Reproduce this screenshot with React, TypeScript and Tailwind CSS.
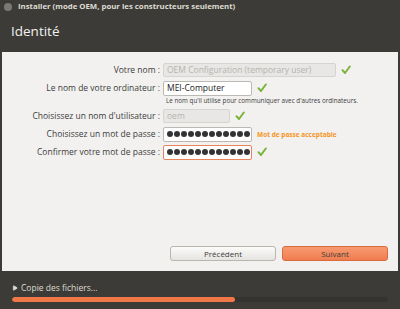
import { Play } from "lucide-react";

function Check() {
  return (
    <svg width="10" height="10" viewBox="0 0 10 10" className="shrink-0">
      <path d="M1.5 5.2 L4 8 L8.8 1.5" fill="none" stroke="#7ab33a" strokeWidth="2" strokeLinecap="round" strokeLinejoin="round" />
    </svg>
  );
}

function Dots({ n }: { n: number }) {
  return (
    <div className="flex items-center gap-[1px]">
      {Array.from({ length: n }).map((_, i) => (
        <span key={i} className="w-[6px] h-[6px] rounded-full bg-[#333]" />
      ))}
    </div>
  );
}

function Row({ label, children }: { label: string; children: React.ReactNode }) {
  return (
    <div className="flex items-center h-[14px]">
      <div className="w-[161px] text-right pr-[3px] text-[8.5px] text-[#3c3c3c] whitespace-nowrap">{label} :</div>
      <div className="flex items-center gap-[5px]">{children}</div>
    </div>
  );
}

export default function App() {
  return (
    <div className="w-[400px] h-[309px] bg-[#3c3b37] flex flex-col overflow-hidden" style={{ fontFamily: '"Open Sans", "DejaVu Sans", sans-serif' }}>
      {/* title bar */}
      <div className="h-[14px] flex items-center gap-[6px] px-[4px]">
        <span className="w-[8px] h-[8px] rounded-full bg-[#7a7973]" />
        <span className="text-[7.8px] font-bold text-[#dfdbd2]">Installer (mode OEM, pour les constructeurs seulement)</span>
      </div>
      {/* header */}
      <div className="h-[38px] flex items-center px-[11px] pb-[4px]">
        <span className="text-[13.5px] text-[#f2f1f0]">Identité</span>
      </div>
      {/* content */}
      <div className="mx-[2px] h-[219px] bg-[#f2f1f0] flex flex-col pt-[11px]">
        <div className="flex flex-col gap-[4px]">
          <Row label="Votre nom">
            <div className="w-[173px] h-[14px] rounded-[2px] border border-[#d6d4d0] bg-[#e8e7e5] flex items-center px-[3px] text-[8.5px] text-[#b5b3ae]">OEM Configuration (temporary user)</div>
            <Check />
          </Row>
          <div className="flex flex-col">
            <Row label="Le nom de votre ordinateur">
              <div className="w-[89px] h-[15px] rounded-[2px] border border-[#bcb9b4] bg-white flex items-center px-[3px] text-[8.5px] text-[#222]">MEI-Computer</div>
              <Check />
            </Row>
            <div className="pl-[164px] pt-[1px] text-[6.3px] text-[#3c3c3c] whitespace-nowrap">Le nom qu'il utilise pour communiquer avec d'autres ordinateurs.</div>
          </div>
          <Row label="Choisissez un nom d'utilisateur">
            <div className="w-[67px] h-[14px] rounded-[2px] border border-[#d6d4d0] bg-[#e8e7e5] flex items-center px-[3px] text-[8.5px] text-[#b5b3ae]">oem</div>
            <Check />
          </Row>
          <Row label="Choisissez un mot de passe">
            <div className="w-[89px] h-[15px] rounded-[2px] border border-[#bcb9b4] bg-white flex items-center px-[3px]"><Dots n={12} /></div>
            <span className="text-[6.5px] font-bold text-[#f7941d] whitespace-nowrap">Mot de passe acceptable</span>
          </Row>
          <Row label="Confirmer votre mot de passe">
            <div className="w-[89px] h-[15px] rounded-[2px] border border-[#e8845a] bg-white flex items-center px-[3px]">
              <Dots n={12} />
              <span className="w-[1px] h-[9px] bg-[#222] ml-[1px]" />
            </div>
            <Check />
          </Row>
        </div>
        <div className="flex-1" />
        <div className="flex justify-end gap-[6px] pr-[10px] pb-[10px]">
          <button className="w-[106px] h-[15px] rounded-[3px] border border-[#b9b6b0] bg-gradient-to-b from-[#fbfbfa] to-[#e6e4e0] text-[8px] text-[#3c3c3c]">Précédent</button>
          <button className="w-[106px] h-[15px] rounded-[3px] border border-[#d86a3e] bg-gradient-to-b from-[#f79a70] to-[#f07d50] text-[8px] text-[#3c3c3c]">Suivant</button>
        </div>
      </div>
      {/* footer */}
      <div className="flex-1 flex flex-col px-[12px] pt-[11px] gap-[2px]">
        <div className="flex items-center gap-[3px] text-[8.5px] text-[#dfdbd2]">
          <Play size={6} className="fill-[#dfdbd2] text-[#dfdbd2]" />
          <span>Copie des fichiers...</span>
        </div>
        <div className="h-[5px] w-[376px] rounded-full bg-[#343330] overflow-hidden">
          <div className="h-full w-[223px] rounded-full bg-[#f07746]" />
        </div>
      </div>
    </div>
  );
}
